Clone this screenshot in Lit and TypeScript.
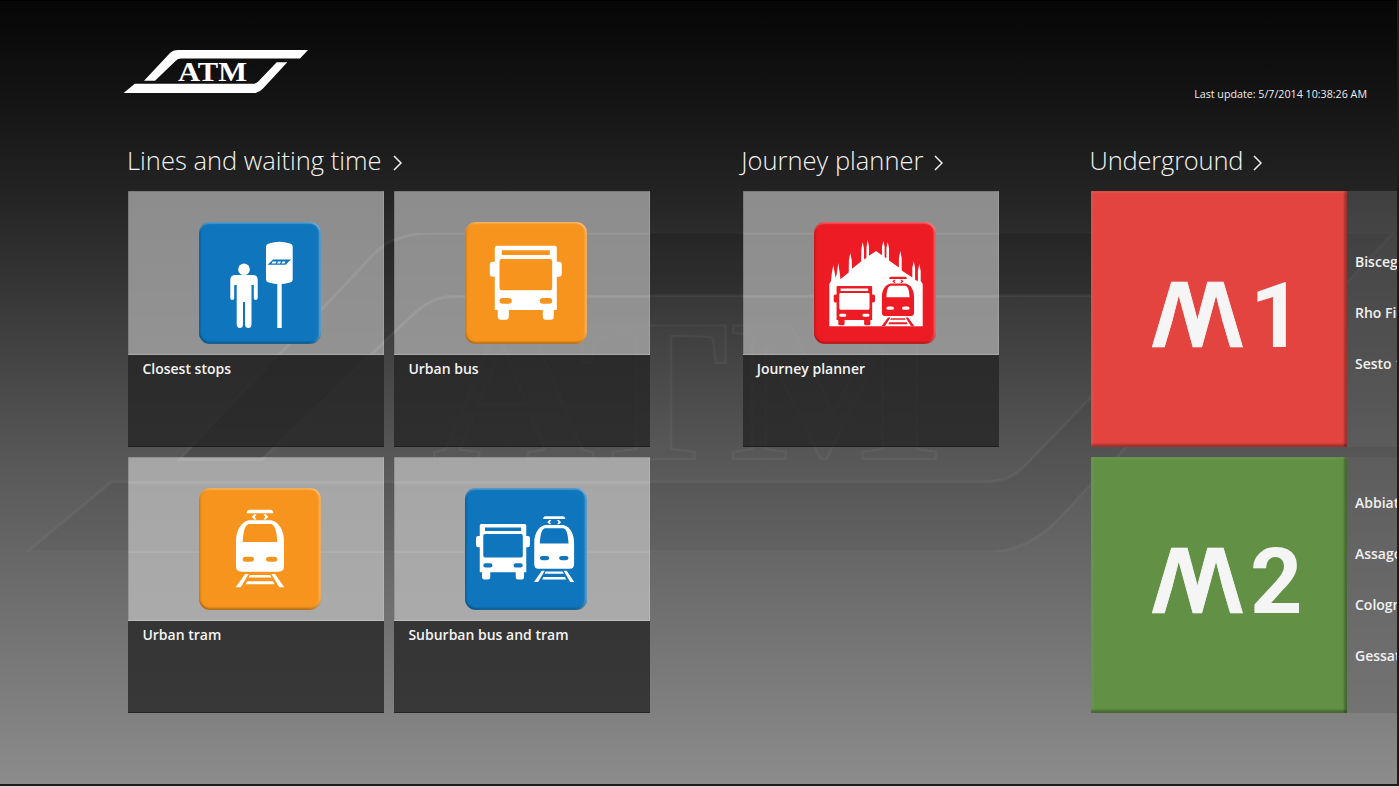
import { LitElement, html, css, svg } from "lit";
import { customElement } from "lit/decorators.js";

const logoPaths = svg`
  <path d="M185 0 L55 0 Q50 0 47 3 L21 30.7 L32 30.7 L52.5 11 Q55 8.6 58 8.6 L177 8.6 Z"/>
  <path d="M0.3 43.3 L11.7 33.8 L130 33.8 Q133 33.8 135 31.8 L153.7 12.3 L164.3 12.3 L140 38.5 Q135.5 43.3 130 43.3 Z"/>
`;

const logoShapes = svg`
  ${logoPaths}
  <text x="55" y="30.7" textLength="69" lengthAdjust="spacingAndGlyphs" font-family="'Liberation Serif', serif" font-weight="700" font-size="27.5">ATM</text>
`;

const busShape = svg`<path fill-rule="evenodd" d="M7 0 H65 Q67 0 67 2 V16 H69 Q72 16 72 19 V28 Q72 31 69 31 H67 V64.3 H64 V71 Q64 74 61 74 H56 Q53 74 53 71 V64.3 H19 V71 Q19 74 16 74 H11 Q8 74 8 71 V64.3 H5 V31 H3 Q0 31 0 28 V19 Q0 16 3 16 H5 V2 Q5 0 7 0 Z
  M12 4.6 H60 V9.3 H12 Z
  M12 13.3 H60 Q62.4 13.3 62.4 15.7 V42 Q62.4 44.6 60 44.6 H12 Q9.7 44.6 9.7 42 V15.7 Q9.7 13.3 12 13.3 Z
  M12.7 52.3 H19 Q22 52.3 22 55.1 Q22 58 19 58 H12.7 Q9.7 58 9.7 55.1 Q9.7 52.3 12.7 52.3 Z
  M53 52.3 H59.4 Q62.4 52.3 62.4 55.1 Q62.4 58 59.4 58 H53 Q50 58 50 55.1 Q50 52.3 53 52.3 Z"/>`;

const tramShape = svg`<path fill-rule="evenodd" d="M11 4 Q11 .5 14 .5 H34.6 Q37.6 .5 37.6 4 Z
  M18.5 5 L16 7.6 L18.5 10.2 H20.8 L19 7.6 L20.8 5 Z
  M27.8 5 L29.6 7.6 L27.8 10.2 H30.1 L32.6 7.6 L30.1 5 Z
  M13 11 H35.6 C44 13 48.3 22 48.3 32 V57 Q48.3 62.4 43 62.4 H5.6 Q.3 62.4 .3 57 V32 C.3 22 4.6 13 13 11 Z
  M13.5 14.7 H35 C38.5 15 41 20 41.6 32.7 H7 C7.6 20 10 15 13.5 14.7 Z
  M10 47.4 H15 Q18.3 47.4 18.3 49.9 Q18.3 52.4 15 52.4 H10 Q7 52.4 7 49.9 Q7 47.4 10 47.4 Z
  M33.6 47.4 H38.6 Q41.6 47.4 41.6 49.9 Q41.6 52.4 38.6 52.4 H33.6 Q30.3 52.4 30.3 49.9 Q30.3 47.4 33.6 47.4 Z
  M9.3 64.7 H13 L5 78 H0 Z
  M35.6 64.7 H39.3 L48.6 78 H43.6 Z
  M14 65.7 H34.6 L35.8 68.2 H12.8 Z
  M11.3 72 H37.3 L38.8 75 H9.8 Z"/>`;

const icons: Record<string, unknown> = {
  stop: svg`
    <g fill="#fff">
      <circle cx="45" cy="47.4" r="5.8"/>
      <path d="M36.5 53 H53.5 Q58.7 53 58.7 58 V76 Q58.7 78 56.7 78 Q54.8 78 54.8 76 V63 H52.5 V102 Q52.5 106 49.5 106 Q46 106 46 102 V80 H44 V102 Q44 106 41 106 Q37.7 106 37.7 102 V63 H35.2 V76 Q35.2 78 33.3 78 Q31.3 78 31.3 76 V58 Q31.3 53 36.5 53 Z"/>
      <path d="M67 25 Q67 22 70 21.5 Q80 18 91 21.5 Q93.7 22 93.7 25 V57 Q93.7 60 91 60.5 Q80 64 70 60.5 Q67 60 67 57 Z"/>
      <rect x="78.3" y="60" width="4.4" height="46"/>
    </g>
    <path fill="#0f75bc" d="M74 37.4 H92 L86.5 42.8 H68.7 Z"/>
    <path fill="#fff" d="M73.5 39.6 H77.5 L76.5 41.4 H72.5 Z M79 39.6 H82 L81 41.4 H78 Z M83.5 39.6 H86.5 L85.5 41.4 H82.5 Z"/>`,
  bus: svg`<g fill="#fff" transform="translate(24.8 23.7)">${busShape}</g>`,
  tram: svg`<g fill="#fff" transform="translate(36.7 21.3)">${tramShape}</g>`,
  both: svg`
    <g fill="#fff" transform="translate(11 36) scale(.75)">${busShape}</g>
    <g fill="#fff" transform="translate(69 27.7) scale(.83 .85)">${tramShape}</g>`,
  journey: svg`<g transform="translate(-7 0)">
    <path fill="#fff" d="M22.3 104.2 V62 L24 59 L24.7 52 L26.3 43 L27.9 52 L28.6 56 L29.7 52 L31.3 41 L32.9 52 L33.4 57.2 L41.7 50.4 L41.9 38 L43.3 31 L44.7 38 L45 46.7 L54.1 39.4 L54.4 27 L55.7 20 L57 27 V37.6 L59.4 35.8 L59.5 25 L60.7 18 L62 25 V33.8 L69 29 L75 33.2 V25 L76.3 19 L77.6 25 V35 L79.4 36.2 V26 L80.7 20 L82 26 V38.4 L91.9 45.6 V36 L93.3 29 L94.7 36 V48.5 L105.3 55.6 V46 L106.7 39 L108.1 46 V58 L110.9 59 V49 L112.3 42 L113.7 49 V59 L115.7 62 V104.2 Z"/>
    <g fill="#ed1c24" transform="translate(26.7 64) scale(.574 .53)">${busShape}</g>
    <g fill="#ed1c24" transform="translate(74.7 54.5) scale(.67 .635)">${tramShape}</g>
  </g>`,
};

@customElement("app-root")
export class AppRoot extends LitElement {
  static styles = css`
    :host { display: block; width: 1399px; height: 787px; overflow: hidden; background: #d8d8d8; font-family: "Open Sans", "Noto Sans", sans-serif; }
    .frame {
      position: relative; box-sizing: border-box; width: 1399px; height: 786px; overflow: hidden;
      border-right: 2px solid #1c1c1c; border-bottom: 2px solid #1c1c1c; border-top: 1px solid #000;
      background: linear-gradient(180deg, #060606 0, #131313 90px, #232323 190px, #565656 450px, #8c8c8c 785px);
    }
    .watermark { position: absolute; left: 25px; top: 231px; width: 1369px; height: 320px; }
    .watermark path { stroke: rgba(255,255,255,.045); stroke-width: .4; }
    .watermark path:nth-of-type(1) { fill: rgba(0,0,0,.12); }
    .watermark path:nth-of-type(2) { fill: rgba(0,0,0,.04); }
    .watermark text { fill: rgba(255,255,255,.012); stroke: rgba(255,255,255,.045); stroke-width: .3; }
    .content { position: relative; }
    header { display: flex; justify-content: space-between; align-items: flex-end; height: 92px; padding: 49px 30px 0 123px; box-sizing: border-box; }
    .logo { display: block; width: 185px; height: 43.3px; fill: #fff; }
    .logo text { fill: #fff; }
    .updated { font-size: 10.7px; color: #eee; line-height: 14px; margin-bottom: -8px; }
    .sections { display: flex; gap: 92.3px; padding: 0 0 0 128.4px; }
    h2 { margin: 0 0 0 -1.4px; height: 98px; box-sizing: border-box; padding-top: 49px; display: flex; align-items: flex-start; gap: 11px; font-weight: 300; font-size: 25.5px; color: #f2f2f2; line-height: 36px; white-space: nowrap; }
    h2 svg { display: block; width: 9px; height: 16px; margin-top: 13px; }
    .under h2 { margin-left: -1.4px; letter-spacing: -.2px; gap: 10px; }
    .grid { display: grid; grid-template-columns: 256px 256px; grid-auto-rows: 256px; gap: 10px; }
    .grid.one { grid-template-columns: 256px; }
    .tile { display: flex; flex-direction: column; }
    .top { position: relative; overflow: hidden; height: 164px; box-sizing: border-box; padding: 31px 0 0 71px; box-shadow: inset 1px 0 rgba(0,0,0,.12), inset -1px 0 rgba(255,255,255,.14), inset 0 1px rgba(0,0,0,.12); border-bottom: 1px solid rgba(255,255,255,.22); }
    .r1 { background: rgba(167,167,167,.8); }
    .r2 { background: rgba(185,185,185,.8); }
    .ghost { position: absolute; left: 0; top: 0; width: 1369px; height: 320px; }
    .ghost path { fill: rgba(255,255,255,.012); stroke: rgba(255,255,255,.08); stroke-width: .4; }
    .icon { position: relative; display: block; width: 122px; height: 122px; border-radius: 11px; box-shadow: inset 0 -2px 2px rgba(0,0,0,.25), inset -2px 0 2px rgba(255,255,255,.35), inset 2px 0 2px rgba(0,0,0,.1), inset 0 2px 1px rgba(255,255,255,.22); }
    .blue { background: #0f75bc; }
    .orange { background: #f7941d; }
    .red { background: #ed1c24; }
    .label { flex: 1; background: rgba(36,36,36,.78); padding: 4px 14px; font-size: 14px; font-weight: 600; color: #f4f4f4; line-height: 20px; box-shadow: inset 0 -1px rgba(0,0,0,.35); }
    .metro-col { display: flex; flex-direction: column; gap: 10px; width: 306px; }
    .metro { display: flex; height: 256px; }
    .badge { flex: 0 0 256px; box-sizing: border-box; display: flex; align-items: flex-start; padding: 92px 0 0 61px; color: #f5f5f5; font-family: Roboto, sans-serif; font-size: 91.5px; line-height: 65px; box-shadow: inset 0 -3px 2px rgba(0,0,0,.25), inset -3px 0 2px rgba(0,0,0,.25), inset 2px 0 2px rgba(255,255,255,.08), inset 0 2px 2px rgba(255,255,255,.08); }
    .m { position: relative; display: block; flex: 0 0 91px; height: 65px; font-weight: 400; text-align: center; }
    .m span, .m::after { display: block; width: 91px; height: 65px; transform-origin: 50% 100%; -webkit-text-stroke: .6px #f5f5f5; }
    .m span { clip-path: inset(-12px 50% -12px -30px); transform: skewX(-16.5deg) scaleX(1.4); }
    .m::after { content: "M"; position: absolute; left: 0; top: 0; clip-path: inset(-12px -30px -12px 50%); transform: skewX(16.5deg) scaleX(1.4); }
    .num { flex: 0 0 52px; margin-left: 7px; text-align: center; font-weight: 700; }
    .m1 { background: #e3443f; }
    .m2 { background: #629145; }
    .stations { flex: 1; min-width: 0; overflow: hidden; display: flex; flex-direction: column; justify-content: center; padding: 0 0 13px 8px; background: rgba(100,100,100,.45); }
    .stations div { height: 51px; line-height: 51px; font-size: 14px; font-weight: 600; color: #f0f0f0; white-space: nowrap; }
  `;

  tile(label: string, color: string, icon: string, x: number, y: number) {
    const ghostPos = `transform: translate(${25 - x}px, ${232 - y}px)`;
    return html`<div class="tile">
      <div class="top ${y > 300 ? "r2" : "r1"}">
        <svg class="ghost" style=${ghostPos} viewBox="0 0 185 43.3" preserveAspectRatio="none">${logoPaths}</svg>
        <svg class="icon ${color}" viewBox="0 0 122 122">${icons[icon]}</svg>
      </div>
      <div class="label">${label}</div>
    </div>`;
  }

  heading(t: string) {
    return html`<h2>${t}<svg viewBox="0 0 9 16"><path d="M1 1 L8 8 L1 15" fill="none" stroke="#f2f2f2" stroke-width="1.5"/></svg></h2>`;
  }

  metro(cls: string, n: string, names: string[]) {
    return html`<div class="metro">
      <div class="badge ${cls}"><div class="m"><span>M</span></div><div class="num">${n}</div></div>
      <div class="stations">${names.map((s) => html`<div>${s}</div>`)}</div>
    </div>`;
  }

  render() {
    return html`<div class="frame">
      <svg class="watermark" viewBox="0 0 185 43.3" preserveAspectRatio="none">${logoShapes}</svg>
      <div class="content">
        <header>
          <svg class="logo" viewBox="0 0 185 43.3">${logoShapes}</svg>
          <div class="updated">Last update: 5/7/2014 10:38:26 AM</div>
        </header>
        <div class="sections">
          <section>
            ${this.heading("Lines and waiting time")}
            <div class="grid">
              ${this.tile("Closest stops", "blue", "stop", 128, 190)}
              ${this.tile("Urban bus", "orange", "bus", 394, 190)}
              ${this.tile("Urban tram", "orange", "tram", 128, 456)}
              ${this.tile("Suburban bus and tram", "blue", "both", 394, 456)}
            </div>
          </section>
          <section>
            ${this.heading("Journey planner")}
            <div class="grid one">${this.tile("Journey planner", "red", "journey", 743, 190)}</div>
          </section>
          <section class="under">
            ${this.heading("Underground")}
            <div class="metro-col">
              ${this.metro("m1", "1", ["Bisceglie", "Rho Fiera", "Sesto 1° Maggio"])}
              ${this.metro("m2", "2", ["Abbiategrasso", "Assago", "Cologno", "Gessate"])}
            </div>
          </section>
        </div>
      </div>
    </div>`;
  }
}
